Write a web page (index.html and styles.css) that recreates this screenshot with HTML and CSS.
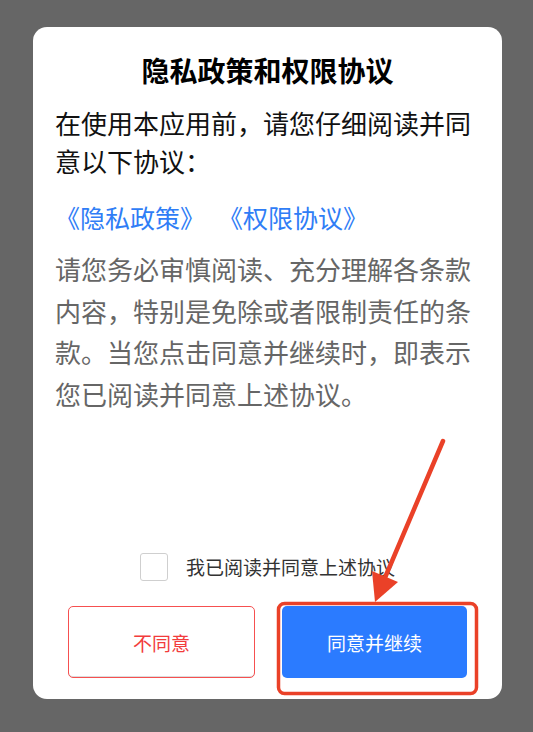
FILE: index.html
```html
<!DOCTYPE html>
<html lang="zh-CN">
<head>
<meta charset="utf-8">
<title>隐私政策和权限协议</title>
<link rel="stylesheet" href="styles.css">
</head>
<body>
<div class="screen">
  <div class="dialog">
    <h1 class="title">隐私政策和权限协议</h1>
    <p class="intro">在使用本应用前，请您仔细阅读并同意以下协议：</p>
    <p class="links"><a class="link">《隐私政策》</a><a class="link">《权限协议》</a></p>
    <p class="notice">请您务必审慎阅读、充分理解各条款内容，特别是免除或者限制责任的条款。当您点击同意并继续时，即表示您已阅读并同意上述协议。</p>
    <label class="agree">
      <span class="checkbox"></span>
      <span class="agree-text">我已阅读并同意上述协议</span>
    </label>
    <div class="actions">
      <button class="btn btn-reject">不同意</button>
      <button class="btn btn-accept">同意并继续</button>
    </div>
  </div>
  <svg class="annotation" width="533" height="732" viewBox="0 0 533 732" xmlns="http://www.w3.org/2000/svg">
    <rect x="278.5" y="603.5" width="198" height="90" rx="6" ry="6" fill="none" stroke="#ea4128" stroke-width="3.5"/>
    <line x1="443" y1="441" x2="384" y2="580" stroke="#ea4128" stroke-width="4.5" stroke-linecap="round"/>
    <polygon points="375,602 372,571 398,582" fill="#ea4128"/>
  </svg>
</div>
</body>
</html>
```

FILE: styles.css
```css
html, body {
  margin: 0;
  padding: 0;
}

body {
  background: #666666;
  font-family: "Noto Sans CJK SC", "Noto Sans", sans-serif;
}

.screen {
  position: relative;
  width: 533px;
  height: 732px;
  padding-top: 27px;
  box-sizing: border-box;
}

.dialog {
  margin-left: 33px;
  width: 469px;
  height: 672px;
  box-sizing: border-box;
  background: #ffffff;
  border-radius: 14px;
  padding: 23px 22px 21px;
  display: flex;
  flex-direction: column;
}

.title {
  margin: 0;
  font-size: 28px;
  line-height: 40px;
  font-weight: 700;
  color: #000;
  text-align: center;
}

.intro {
  margin: 14px 0 0;
  font-size: 26px;
  line-height: 38px;
  color: #111;
}

.links {
  margin: 17px 0 0;
  font-size: 25px;
  line-height: 40px;
  display: flex;
  gap: 13px;
}

.link {
  color: #2f7df6;
  text-decoration: none;
}

.notice {
  margin: 11px 0 0;
  font-size: 26px;
  line-height: 41.5px;
  color: #666666;
}

.agree {
  margin-top: auto;
  display: flex;
  align-items: center;
  justify-content: center;
  gap: 18px;
  height: 28px;
}

.checkbox {
  width: 26px;
  height: 26px;
  border: 1px solid #cfcfcf;
  border-radius: 3px;
  background: #fff;
}

.agree-text {
  font-size: 19px;
  line-height: 28px;
  color: #333;
}

.actions {
  margin-top: 25px;
  padding: 0 13px;
  display: flex;
  gap: 27px;
}

.btn {
  flex: 1;
  height: 72px;
  border-radius: 5px;
  font-family: "Noto Sans CJK SC", "Noto Sans", sans-serif;
  font-size: 19px;
  cursor: pointer;
}

.btn-reject {
  background: #fff;
  color: #f23c3c;
  border: 1.5px solid #f65050;
  box-shadow: inset 0 -1px 0 #dcdcdc;
}

.btn-accept {
  background: #2b7bff;
  color: #fff;
  border: none;
}

.annotation {
  position: absolute;
  left: 0;
  top: 0;
  pointer-events: none;
}
```
